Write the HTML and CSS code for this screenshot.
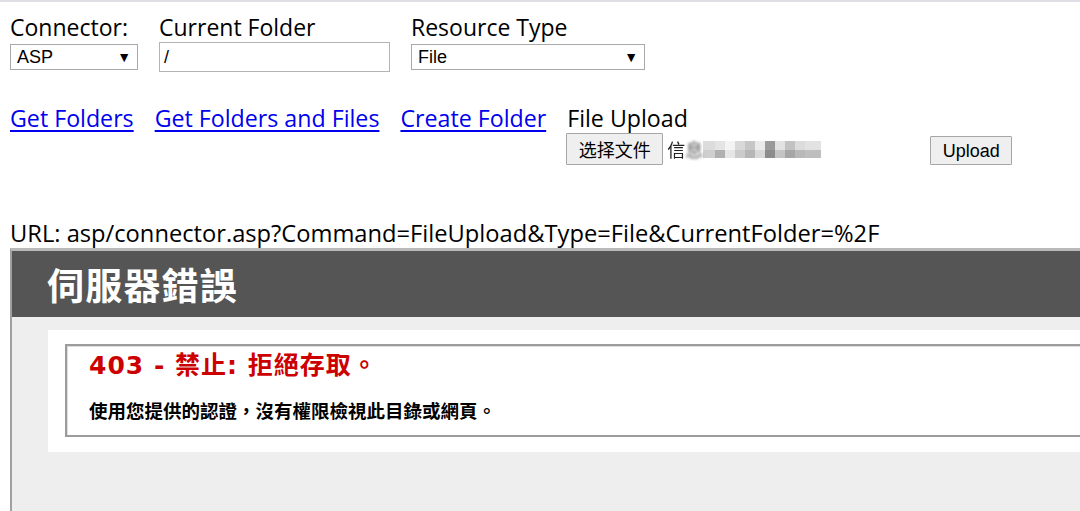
FILE: index.html
```html
<!DOCTYPE html>
<html lang="en">
<head>
<meta charset="utf-8">
<title>FCKeditor - Connectors Tests</title>
<link rel="stylesheet" href="styles.css">
</head>
<body>
<div class="topline"></div>
<div class="page">
  <div class="params">
    <div class="field">
      <div class="label">Connector:</div>
      <div class="select sel-connector"><span>ASP</span><span class="caret">▼</span></div>
    </div>
    <div class="field">
      <div class="label">Current Folder</div>
      <div class="textbox">/</div>
    </div>
    <div class="field">
      <div class="label">Resource Type</div>
      <div class="select sel-type"><span>File</span><span class="caret">▼</span></div>
    </div>
  </div>

  <div class="actions">
    <a href="#" class="link">Get Folders</a>
    <a href="#" class="link">Get Folders and Files</a>
    <a href="#" class="link">Create Folder</a>
    <form class="upload">
      <div class="label">File Upload</div>
      <div class="upload-row">
        <div class="file">
          <span class="btn btn-choose">选择文件</span>
          <span class="fname">信<span class="blurchar">息</span></span>
          <span class="mosaic">
            <i class="m1"></i><i class="m2"></i><i class="m3"></i><i class="m4"></i><i class="m5"></i><i class="m6"></i><i class="m7"></i><i class="m8"></i><i class="m9"></i><i class="m10"></i><i class="m11"></i>
          </span>
        </div>
        <span class="btn btn-upload">Upload</span>
      </div>
    </form>
  </div>

  <div class="url">URL: <span>asp/connector.asp?Command=FileUpload&amp;Type=File&amp;CurrentFolder=%2F</span></div>

  <div class="frame">
    <div class="err-header">伺服器錯誤</div>
    <div class="err-body">
      <div class="content-box">
        <div class="fieldset">
          <h2 class="err-title">403 - 禁止: 拒絕存取。</h2>
          <h3 class="err-msg">使用您提供的認證，沒有權限檢視此目錄或網頁。</h3>
        </div>
      </div>
    </div>
  </div>
</div>
</body>
</html>
```

FILE: styles.css
```css
html, body {
  margin: 0;
  padding: 0;
  height: 511px;
  overflow: hidden;
  background: #ffffff;
}

body {
  font-family: "Open Sans", "Noto Sans CJK SC", sans-serif;
  font-size: 23px;
  color: #000;
}

.topline {
  height: 2px;
  background: #dedee6;
}

.page {
  display: flex;
  flex-direction: column;
  padding: 11px 0 0 10px;
  height: 509px;
  box-sizing: border-box;
}

/* ---- parameters row ---- */
.params {
  display: flex;
  gap: 21px;
}

.field {
  display: flex;
  flex-direction: column;
}

.label {
  line-height: 29px;
  white-space: nowrap;
}

.select {
  margin-top: 2px;
  height: 26px;
  box-sizing: border-box;
  border: 1px solid #a9a9a9;
  display: flex;
  align-items: center;
  justify-content: space-between;
  padding: 0 6px 0 6px;
  font-family: "Liberation Sans", Arial, sans-serif;
  font-size: 18px;
  background: #fff;
}

.sel-connector { width: 128px; }
.sel-type { width: 234px; }

.caret {
  font-size: 14px;
  line-height: 1;
}

.textbox {
  width: 231px;
  height: 30px;
  box-sizing: border-box;
  border: 1px solid #b4b4b4;
  padding-left: 4px;
  font-family: "Liberation Sans", Arial, sans-serif;
  font-size: 18px;
  line-height: 28px;
}

/* ---- actions row ---- */
.actions {
  display: flex;
  align-items: flex-start;
  gap: 21px;
  margin-top: 31px;
  line-height: 30px;
  font-size: 23.2px;
}

.link {
  color: #0000ee;
  text-decoration: underline;
  text-underline-offset: 3px;
  white-space: nowrap;
}

.upload {
  display: flex;
  flex-direction: column;
  margin: 0;
}

.upload .label {
  line-height: 30px;
}

.upload-row {
  display: flex;
  align-items: flex-end;
  gap: 5px;
  margin-left: -1px;
}

.file {
  width: 359px;
  display: flex;
  align-items: center;
}

.btn {
  display: flex;
  align-items: center;
  justify-content: center;
  box-sizing: border-box;
  background: #efefef;
  border: 1px solid #a6a6a6;
  border-radius: 1px;
}

.btn-choose {
  width: 97px;
  height: 32px;
  font-family: "Noto Sans CJK SC", sans-serif;
  font-size: 18px;
}

.btn-upload {
  width: 82px;
  height: 29px;
  font-family: "Liberation Sans", Arial, sans-serif;
  font-size: 18px;
}

.fname {
  margin-left: 4px;
  font-family: "Noto Sans CJK SC", sans-serif;
  font-size: 18px;
  color: #222;
  filter: blur(0.6px);
}

.blurchar {
  color: #555;
  filter: blur(1.5px);
}

.mosaic {
  display: flex;
  height: 17px;
}

.mosaic i {
  display: block;
  width: 10px;
  height: 17px;
}

.mosaic .m1 { background: linear-gradient(#dcdcdc 50%, #cfcfcf 50%); width: 12px; }
.mosaic .m2 { background: linear-gradient(#e4e4e4 50%, #b0b0b0 50%); }
.mosaic .m3 { background: linear-gradient(#f4f4f4 50%, #e6e6e6 50%); }
.mosaic .m4 { background: linear-gradient(#d8d8d8 50%, #cbcbcb 50%); }
.mosaic .m5 { background: linear-gradient(#c6c6c6 50%, #b6b6b6 50%); }
.mosaic .m6 { background: linear-gradient(#eaeaea 50%, #d8d8d8 50%); }
.mosaic .m7 { background: linear-gradient(#9a9a9a 50%, #8c8c8c 50%); }
.mosaic .m8 { background: linear-gradient(#e2e2e2 50%, #c4c4c4 50%); }
.mosaic .m9 { background: linear-gradient(#c2c2c2 50%, #a6a6a6 50%); }
.mosaic .m10 { background: linear-gradient(#dcdcdc 50%, #b8b8b8 50%); }
.mosaic .m11 { background: linear-gradient(#e2e2e2 50%, #bebebe 50%); width: 16px; }

/* ---- url ---- */
.url {
  margin-top: 53px;
  line-height: 30px;
  font-size: 23.7px;
  white-space: nowrap;
}

/* ---- frame ---- */
.frame {
  width: calc(100% + 40px);
  flex: 1;
  border-top: 3px solid #b9b9b9;
  border-left: 2px solid #a0a0a0;
  background: #eeeeee;
  display: flex;
  flex-direction: column;
  overflow: hidden;
}

.err-header {
  height: 66px;
  flex: none;
  background: #555555;
  color: #ffffff;
  display: flex;
  align-items: center;
  padding-left: 35px;
  font-family: "Noto Sans CJK TC", sans-serif;
  font-weight: 700;
  font-size: 37px;
  letter-spacing: 1.2px;
}

.err-body {
  flex: 1;
  padding: 13px 0 0 36px;
  background: #eeeeee;
}

.content-box {
  background: #ffffff;
  padding: 14px 0 15px 17px;
}

.fieldset {
  border: 2px solid #9c9c9c;
  box-shadow: inset 1px 1px 0 #dcdcdc;
  padding: 6px 0 13px 22px;
}

.err-title {
  margin: 0;
  font-family: "DejaVu Sans", "Noto Sans CJK TC", sans-serif;
  font-weight: 700;
  font-size: 25px;
  line-height: 28px;
  letter-spacing: 1px;
  color: #cc0000;
}

.err-msg {
  margin: 18px 0 0;
  font-family: "Noto Sans CJK TC", sans-serif;
  font-weight: 700;
  font-size: 18.5px;
  line-height: 24px;
  color: #000;
}
```
